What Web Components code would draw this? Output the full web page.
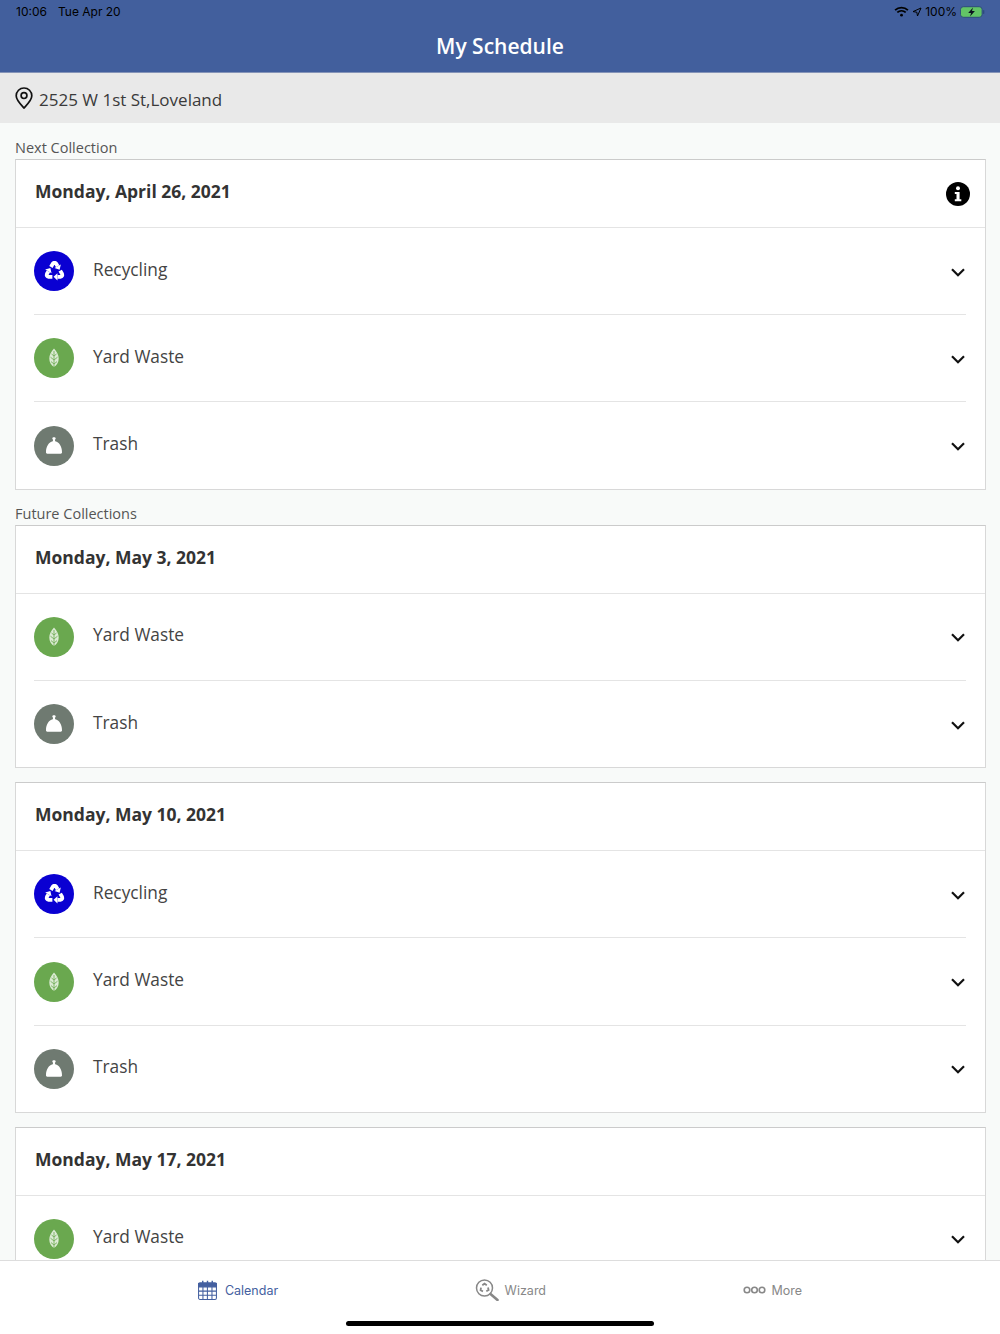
<!DOCTYPE html>
<html lang="en">
<head>
<meta charset="utf-8">
<title>My Schedule</title>
<style>
  html, body { margin: 0; height: 100%; }
  body { font-family: "Open Sans", "Liberation Sans", sans-serif; overflow: hidden; }
  schedule-app { height: 1334px; }
  collection-card + collection-card { margin-top: 14px; }
</style>
</head>
<body>
<schedule-app>
  <app-header slot="top" title="My Schedule"></app-header>
  <address-bar slot="top">2525 W 1st St,Loveland</address-bar>

  <section-label>Next Collection</section-label>
  <collection-card date="Monday, April 26, 2021" info>
    <collection-row type="recycling"></collection-row>
    <collection-row type="yard"></collection-row>
    <collection-row type="trash"></collection-row>
  </collection-card>

  <section-label>Future Collections</section-label>
  <collection-card date="Monday, May 3, 2021">
    <collection-row type="yard"></collection-row>
    <collection-row type="trash"></collection-row>
  </collection-card>
  <collection-card date="Monday, May 10, 2021">
    <collection-row type="recycling"></collection-row>
    <collection-row type="yard"></collection-row>
    <collection-row type="trash"></collection-row>
  </collection-card>
  <collection-card date="Monday, May 17, 2021">
    <collection-row type="yard"></collection-row>
  </collection-card>

  <tab-bar slot="bottom">
    <tab-item icon="calendar" active>Calendar</tab-item>
    <tab-item icon="wizard">Wizard</tab-item>
    <tab-item icon="more">More</tab-item>
  </tab-bar>
</schedule-app>

<script>
// one arm of the recycling symbol, repeated three times round (12,13)
const recycleArm = `<path d="M7.900 7.850L10 4.200Q12 1.800 14 4.200L15.600 7" fill="none" stroke="#fff" stroke-width="4.400"/>
      <path d="M19.200 4.900L12 9.100l5.850 1.800z" fill="#fff"/>`;

const icons = {
  recycling: `<svg viewBox="0 1 24 24" width="21" height="21">
      <g>${recycleArm}</g>
      <g transform="rotate(120 12 13)">${recycleArm}</g>
      <g transform="rotate(240 12 13)">${recycleArm}</g>
    </svg>`,
  yard: `<svg viewBox="0 0 24 24" width="24" height="24">
      <path d="M12 2.500c3 3.200 4.700 6.500 4.700 10 0 3.800-1.900 6.700-4.700 8.500-2.800-1.800-4.700-4.700-4.700-8.500 0-3.500 1.700-6.800 4.700-10z" fill="#dcebd4"/>
      <path d="M12 5v17M12 10l-2.500-2M12 10l2.500-2M12 14l-3.500-2.800M12 14l3.500-2.800M12 18l-3-2.400M12 18l3-2.400" stroke="#6aa84f" stroke-width=".8" fill="none"/>
    </svg>`,
  trash: `<svg viewBox="0 0 24 24" width="24" height="24" fill="#fff">
      <path d="M10.300 4.500c0-.8.700-1.200 1.700-1.200s1.700.4 1.700 1.200c0 .6-.4 1-.8 1.300l.3 1.500c4 1 6.800 5 6.800 11 0 1-.5 1.400-1.300 1.400H5.300c-.8 0-1.300-.4-1.300-1.400 0-6 2.800-10 6.800-11l.3-1.500c-.4-.3-.8-.7-.8-1.300z"/>
    </svg>`,
  chevron: `<svg viewBox="0 0 14 9" width="14" height="9" fill="none" stroke="#111" stroke-width="2.200">
      <path d="M1 1.200l6 6 6-6"/>
    </svg>`,
  info: `<svg viewBox="0 0 24 24" width="24" height="24">
      <circle cx="12" cy="12" r="12" fill="#000"/>
      <circle cx="12" cy="6.200" r="2" fill="#fff"/>
      <path d="M8.800 10h4.800v7.200h1.700v2.100H8.800v-2.100h1.700v-5.100H8.800z" fill="#fff"/>
    </svg>`,
  pin: `<svg viewBox="0 0 18 22" width="18" height="22" fill="none" stroke="#111" stroke-width="1.700">
      <path d="M9 21c-1-1.300-7.800-7.300-7.800-12.200C1.200 4.400 4.700 1 9 1s7.800 3.400 7.800 7.800C16.800 13.700 10 19.700 9 21z"/>
      <circle cx="9" cy="8.600" r="2.900"/>
    </svg>`,
  calendar: `<svg viewBox="0 0 20 21" width="19" height="20" fill="none" stroke="#4460a0" stroke-width="1.100">
      <rect x=".6" y="3" width="18.800" height="17.400" rx="1.500"/>
      <path d="M.6 3.600h18.800v3.700H.6z" fill="#4460a0"/>
      <path d="M5 .8v4M10 .8v4M15 .8v4" stroke-width="1.500"/>
      <path d="M5.200 7.300v13M9.900 7.300v13M14.700 7.300v13M.6 11.700h18.800M.6 16h18.800"/>
    </svg>`,
  wizard: `<svg viewBox="0 0 24 22" width="24" height="22" fill="none" stroke="#888">
      <circle cx="9.500" cy="9" r="8" stroke-width="1.500"/>
      <path d="M15.500 15l7 6" stroke-width="2.600" stroke-linecap="round"/>
      <path d="M7.300 6.200l2.200-1.500 2.300 1.500M13 8.500l.6 2.500-2.300 1.300M8 12.300l-2.400-1 .4-2.700" stroke-width="1.800"/>
    </svg>`,
  more: `<svg viewBox="0 0 23 8" width="23" height="8" fill="none" stroke="#888" stroke-width="1.600">
      <circle cx="4" cy="4" r="2.800"/><circle cx="11.500" cy="4" r="2.800"/><circle cx="19" cy="4" r="2.800"/>
    </svg>`,
};

const rowTypes = {
  recycling: { label: "Recycling", color: "#0a00d2" },
  yard: { label: "Yard Waste", color: "#6aa84f" },
  trash: { label: "Trash", color: "#6f7a71" },
};

class ScheduleApp extends HTMLElement {
  constructor() {
    super();
    const shadow = this.attachShadow({ mode: "open" });
    shadow.innerHTML = `
      <style>
        :host { display: flex; flex-direction: column; background: #f8faf9; overflow: hidden; }
        main { flex: 1; min-height: 0; overflow: hidden; padding: 1px 14px 0 15px; }
      </style>
      <slot name="top"></slot>
      <main><slot></slot></main>
      <slot name="bottom"></slot>
    `;
  }
}

class AppHeader extends HTMLElement {
  constructor() {
    super();
    const shadow = this.attachShadow({ mode: "open" });
    shadow.innerHTML = `
      <style>
        :host { display: block; height: 72px; background: #425f9d; border-bottom: 1px solid #8594b8; }
        .status {
          display: flex; align-items: center; height: 23px; padding: 0 15px 1px 16px;
          font: 12px Inter, "Liberation Sans", sans-serif; color: #000;
        }
        .date { margin-left: 11px; }
        .right { margin-left: auto; display: flex; align-items: center; gap: 3px; }
        h1 {
          margin: 0; padding-top: 5px; text-align: center;
          font: 600 21px/34px "Open Sans", sans-serif; color: #fff;
        }
      </style>
      <div class="status">
        <span>10:06</span><span class="date">Tue Apr 20</span>
        <div class="right">
          <svg viewBox="0 0 16 12" width="15" height="11" fill="none" stroke="#000" stroke-width="2">
            <path d="M1 4.500c4-3.700 10-3.700 14 0M3.400 7c2.600-2.300 6.600-2.300 9.200 0"/>
            <circle cx="8" cy="10" r="1.500" fill="#000" stroke="none"/>
          </svg>
          <svg viewBox="0 0 10 10" width="10" height="10" fill="none" stroke="#000" stroke-width="1">
            <path d="M9 1L1 4.600l3.800.6.700 3.800z"/>
          </svg>
          <span>100%</span>
          <svg viewBox="0 0 26 12" width="25" height="12">
            <rect x=".5" y=".5" width="22.500" height="11" rx="3" fill="#62c466" stroke="#2d4a7c"/>
            <rect x="24" y="4" width="1.300" height="4" rx=".6" fill="#2d4a7c"/>
            <path d="M13.500 1.200L8.500 7h3l-1 3.800 5-5.800h-3z" fill="#0c1320"/>
          </svg>
        </div>
      </div>
      <h1>${this.getAttribute("title")}</h1>
    `;
  }
}

class AddressBar extends HTMLElement {
  constructor() {
    super();
    const shadow = this.attachShadow({ mode: "open" });
    shadow.innerHTML = `
      <style>
        :host {
          display: flex; align-items: center; gap: 6px; height: 50px; padding-left: 15px;
          background: #e9e9e9; font: 500 17px "Open Sans", sans-serif; color: #3a3a3a;
        }
        svg { display: block; }
        span { margin-top: 2px; }
      </style>
      ${icons.pin}<span><slot></slot></span>
    `;
  }
}

class SectionLabel extends HTMLElement {
  constructor() {
    super();
    const shadow = this.attachShadow({ mode: "open" });
    shadow.innerHTML = `
      <style>
        :host { display: block; height: 35px; box-sizing: border-box; padding-top: 13px; font: 14.500px/21px "Open Sans", sans-serif; color: #555; }
      </style>
      <slot></slot>
    `;
  }
}

class CollectionCard extends HTMLElement {
  constructor() {
    super();
    const shadow = this.attachShadow({ mode: "open" });
    const info = this.hasAttribute("info") ? `<span class="info">${icons.info}</span>` : "";
    shadow.innerHTML = `
      <style>
        :host { display: block; background: #fff; border: 1px solid #d8d8d8; border-top-color: #cbcbcb; }
        header {
          display: flex; align-items: center; justify-content: space-between;
          height: 67px; padding: 0 15px 0 19px;
          border-bottom: 1px solid #e4e4e4;
        }
        h2 { margin: 0 0 5px; font: 700 17.500px "Open Sans", sans-serif; color: #333; }
        .info { display: flex; }
        .rows { padding: 0 19px 0 18px; }
        ::slotted(collection-row:not(:last-child)) { border-bottom: 1px solid #e4e4e4; }
      </style>
      <header><h2>${this.getAttribute("date")}</h2>${info}</header>
      <div class="rows"><slot></slot></div>
    `;
  }
}

class CollectionRow extends HTMLElement {
  constructor() {
    super();
    const shadow = this.attachShadow({ mode: "open" });
    const type = rowTypes[this.getAttribute("type")];
    shadow.innerHTML = `
      <style>
        :host { display: flex; align-items: center; height: 86.240px; }
        .badge {
          display: flex; align-items: center; justify-content: center; flex: none;
          width: 40px; height: 40px; border-radius: 50%; background: ${type.color};
        }
        .label { margin: 0 0 4px 19px; font: 17.300px "Open Sans", sans-serif; color: #444; }
        .chevron { display: flex; margin: 2px 1px 0 auto; }
      </style>
      <span class="badge">${icons[this.getAttribute("type")]}</span>
      <span class="label">${type.label}</span>
      <span class="chevron">${icons.chevron}</span>
    `;
  }
}

class TabBar extends HTMLElement {
  constructor() {
    super();
    const shadow = this.attachShadow({ mode: "open" });
    shadow.innerHTML = `
      <style>
        :host { display: block; height: 74px; box-sizing: border-box; background: #fff; border-top: 1px solid #ddd; }
        .tabs { display: flex; justify-content: center; align-items: center; gap: 196.500px; height: 58px; }
        .home { width: 308px; height: 5px; margin: 2px auto 0; border-radius: 3px; background: #000; }
      </style>
      <div class="tabs"><slot></slot></div>
      <div class="home"></div>
    `;
  }
}

class TabItem extends HTMLElement {
  constructor() {
    super();
    const shadow = this.attachShadow({ mode: "open" });
    const active = this.hasAttribute("active");
    shadow.innerHTML = `
      <style>
        :host {
          display: flex; align-items: center; gap: ${active ? 8 : 6}px;
          font: 12.500px Inter, "Liberation Sans", sans-serif; color: ${active ? "#4460a0" : "#888"};
        }
        svg { display: block; }
      </style>
      ${icons[this.getAttribute("icon")]}<span><slot></slot></span>
    `;
  }
}

customElements.define("schedule-app", ScheduleApp);
customElements.define("app-header", AppHeader);
customElements.define("address-bar", AddressBar);
customElements.define("section-label", SectionLabel);
customElements.define("collection-card", CollectionCard);
customElements.define("collection-row", CollectionRow);
customElements.define("tab-bar", TabBar);
customElements.define("tab-item", TabItem);
</script>
</body>
</html>
